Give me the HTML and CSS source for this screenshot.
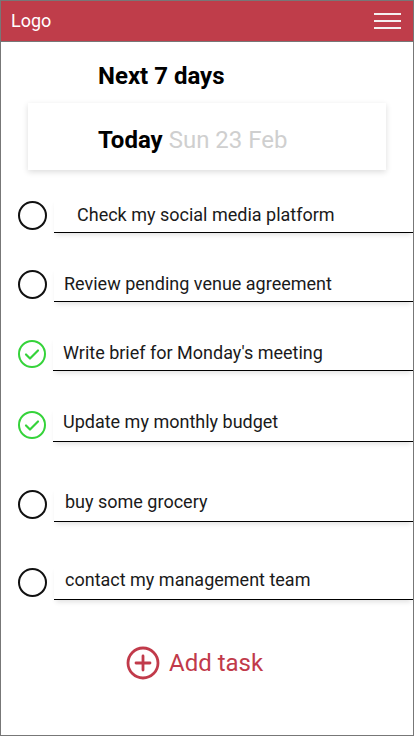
FILE: index.html
```html
<!DOCTYPE html>
<html lang="en">
<head>
<meta charset="utf-8">
<title>Tasks</title>
<link rel="stylesheet" href="styles.css">
</head>
<body>
<div class="page">
  <header class="topbar">
    <span class="logo">Logo</span>
    <button class="menu" aria-label="Menu">
      <span class="menu-line"></span>
      <span class="menu-line"></span>
      <span class="menu-line"></span>
    </button>
  </header>

  <h1 class="title">Next 7 days</h1>

  <div class="day-card">
    <span class="day-name">Today</span>
    <span class="day-date">Sun 23 Feb</span>
  </div>

  <ul class="tasks">
    <li class="task">
      <span class="check"></span>
      <span class="label label--indent">Check my social media platform</span>
    </li>
    <li class="task">
      <span class="check"></span>
      <span class="label">Review pending venue agreement</span>
    </li>
    <li class="task">
      <svg class="check-done" viewBox="0 0 30 30" width="30" height="30"><circle cx="15" cy="15" r="13" fill="none" stroke="#35d33a" stroke-width="2"/><path d="M9 15.5 L13 19.5 L21 11.5" fill="none" stroke="#35d33a" stroke-width="2.2" stroke-linecap="round" stroke-linejoin="round"/></svg>
      <span class="label">Write brief for Monday's meeting</span>
    </li>
    <li class="task task--tall">
      <svg class="check-done" viewBox="0 0 30 30" width="30" height="30"><circle cx="15" cy="15" r="13" fill="none" stroke="#35d33a" stroke-width="2"/><path d="M9 15.5 L13 19.5 L21 11.5" fill="none" stroke="#35d33a" stroke-width="2.2" stroke-linecap="round" stroke-linejoin="round"/></svg>
      <span class="label label--raised">Update my monthly budget</span>
    </li>
    <li class="task task--loose">
      <span class="check"></span>
      <span class="label label--wide label--raised">buy some grocery</span>
    </li>
    <li class="task task--loose2">
      <span class="check"></span>
      <span class="label label--wide label--raised">contact my management team</span>
    </li>
  </ul>

  <div class="add-task">
    <svg class="add-icon" viewBox="0 0 34 34" width="34" height="34"><circle cx="17" cy="17" r="15" fill="none" stroke="#c13a4a" stroke-width="2.8"/><path d="M17 10 V24 M10 17 H24" stroke="#c13a4a" stroke-width="2.8" stroke-linecap="round"/></svg>
    <span class="add-text">Add task</span>
  </div>
</div>
</body>
</html>
```

FILE: styles.css
```css
* { box-sizing: border-box; }

html, body {
  margin: 0;
  padding: 0;
  background: #fff;
}

body {
  font-family: Roboto, "Liberation Sans", Arial, sans-serif;
}

.page {
  width: 414px;
  height: 736px;
  border: 1px solid #777;
  overflow: hidden;
  display: flex;
  flex-direction: column;
}

.topbar {
  height: 41px;
  background: #bf3d4a;
  border-bottom: 1px solid #777;
  display: flex;
  align-items: center;
  justify-content: space-between;
  padding: 0 12px 0 10px;
  flex-shrink: 0;
}

.logo {
  color: #fff;
  font-size: 18px;
  line-height: 20px;
}

.menu {
  background: none;
  border: 0;
  padding: 0;
  width: 27px;
  height: 16px;
  display: flex;
  flex-direction: column;
  justify-content: space-between;
  cursor: pointer;
}

.menu-line {
  display: block;
  height: 2px;
  background: #f4f0f0;
}

.title {
  margin: 20px 0 0 97px;
  font-size: 24px;
  font-weight: 700;
  line-height: 28px;
  color: #000;
}

.day-card {
  margin: 13px 0 0 27px;
  width: 358px;
  height: 67px;
  padding: 7px 0 0 70px;
  display: flex;
  align-items: center;
  gap: 6px;
  background: #fff;
  box-shadow: 0 2px 6px rgba(0, 0, 0, 0.14);
  font-size: 24px;
}

.day-name {
  font-weight: 700;
  color: #000;
}

.day-date {
  color: #cfcfcf;
}

.tasks {
  list-style: none;
  margin: 28px 0 0;
  padding: 0;
  display: flex;
  flex-direction: column;
  gap: 34px;
}

.task {
  display: flex;
  align-items: center;
  height: 35px;
}

.task--tall { margin-top: 2px; }
.task--loose { margin-top: 11px; }
.task--loose2 { margin-top: 9px; }

.check {
  width: 29px;
  height: 29px;
  border: 2px solid #111;
  border-radius: 50%;
  margin: 0 7px 0 17px;
  flex-shrink: 0;
}

.check-done {
  margin: 0 6px 0 16px;
  flex-shrink: 0;
}

.label {
  flex: 1;
  height: 35px;
  display: flex;
  align-items: center;
  padding: 0 0 2px 10px;
  border-bottom: 1px solid #000;
  box-shadow: 0 4px 5px -2px rgba(0, 0, 0, 0.12);
  font-size: 18px;
  color: #1a1a1a;
  white-space: nowrap;
}

.label--indent { padding-left: 23px; }
.label--wide { padding-left: 11px; }
.label--raised { padding-bottom: 6px; }

.add-task {
  margin: 46px 0 0 125px;
  display: flex;
  align-items: center;
  gap: 9px;
}

.add-text {
  color: #c13a4a;
  font-size: 24px;
}
```
